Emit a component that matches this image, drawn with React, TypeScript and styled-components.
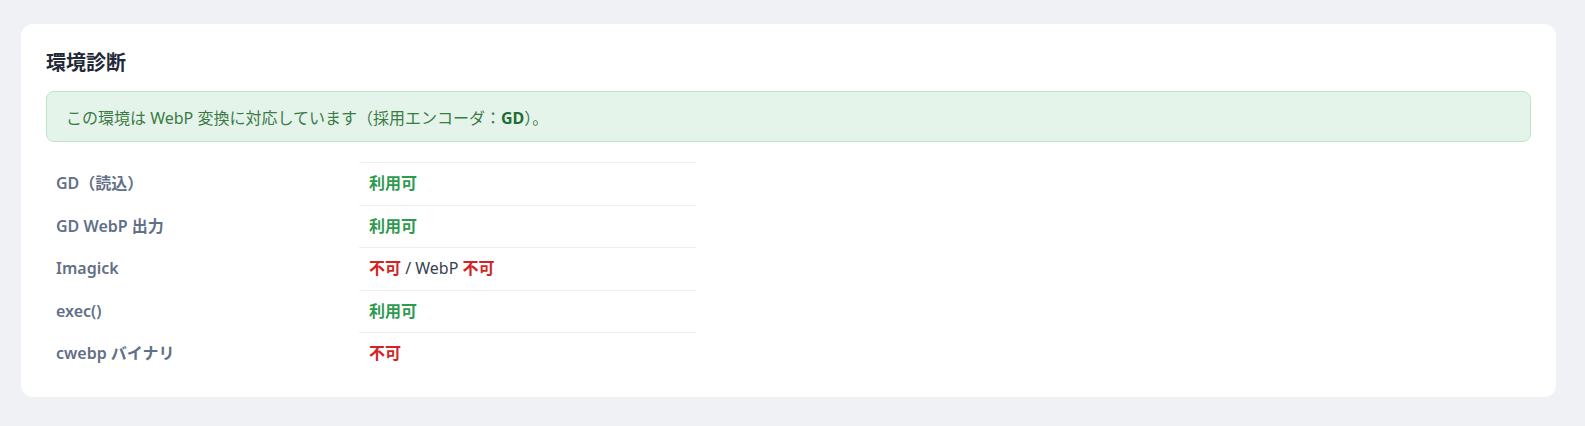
import React from "react";
import styled, { createGlobalStyle } from "styled-components";

const GlobalStyle = createGlobalStyle`
  html, body {
    margin: 0;
    padding: 0;
    background: #f0f1f5;
  }
  body {
    font-family: "Noto Sans", "Noto Sans CJK JP", sans-serif;
    color: #1f2937;
  }
`;

type Status = "ok" | "ng";

interface DiagRow {
  label: string;
  value: React.ReactNode;
}

const Page = styled.div`
  padding: 24px 29px 29px 21px;
`;

const Card = styled.section`
  background: #ffffff;
  border-radius: 12px;
  padding: 25px 25px 22px;
`;

const Heading = styled.h2`
  margin: 0 0 15px;
  font-size: 20px;
  line-height: 27px;
  font-weight: 700;
  color: #1f2937;
`;

const Notice = styled.div`
  background: #e5f4ea;
  border: 1px solid #bde3c7;
  border-radius: 8px;
  padding: 0 19px;
  height: 49px;
  display: flex;
  align-items: center;
  font-size: 16px;
  color: #3b7a45;
  margin-bottom: 20px;

  strong {
    font-weight: 700;
    color: #1f6b34;
  }
`;

const Table = styled.table`
  width: 650px;
  border-collapse: collapse;
  font-size: 16px;
`;

const Label = styled.th`
  width: 293px;
  text-align: left;
  font-weight: 600;
  color: #627087;
  padding: 10px 10px;
  line-height: 21.5px;
`;

const Value = styled.td`
  padding: 10px 10px;
  line-height: 21.5px;
  color: #374151;
  border-top: 1px solid #eeeff2;
`;

const Badge = styled.span<{ $status: Status }>`
  font-weight: 700;
  color: ${({ $status }) => ($status === "ok" ? "#2e9a4e" : "#d32424")};
`;

const rows: DiagRow[] = [
  { label: "GD（読込）", value: <Badge $status="ok">利用可</Badge> },
  { label: "GD WebP 出力", value: <Badge $status="ok">利用可</Badge> },
  {
    label: "Imagick",
    value: (
      <>
        <Badge $status="ng">不可</Badge> / WebP <Badge $status="ng">不可</Badge>
      </>
    ),
  },
  { label: "exec()", value: <Badge $status="ok">利用可</Badge> },
  { label: "cwebp バイナリ", value: <Badge $status="ng">不可</Badge> },
];

export default function App() {
  return (
    <>
      <GlobalStyle />
      <Page>
        <Card>
          <Heading>環境診断</Heading>
          <Notice>
            <span>
              この環境は WebP 変換に対応しています（採用エンコーダ：<strong>GD</strong>）。
            </span>
          </Notice>
          <Table>
            <tbody>
              {rows.map((row) => (
                <tr key={row.label}>
                  <Label>{row.label}</Label>
                  <Value>{row.value}</Value>
                </tr>
              ))}
            </tbody>
          </Table>
        </Card>
      </Page>
    </>
  );
}
